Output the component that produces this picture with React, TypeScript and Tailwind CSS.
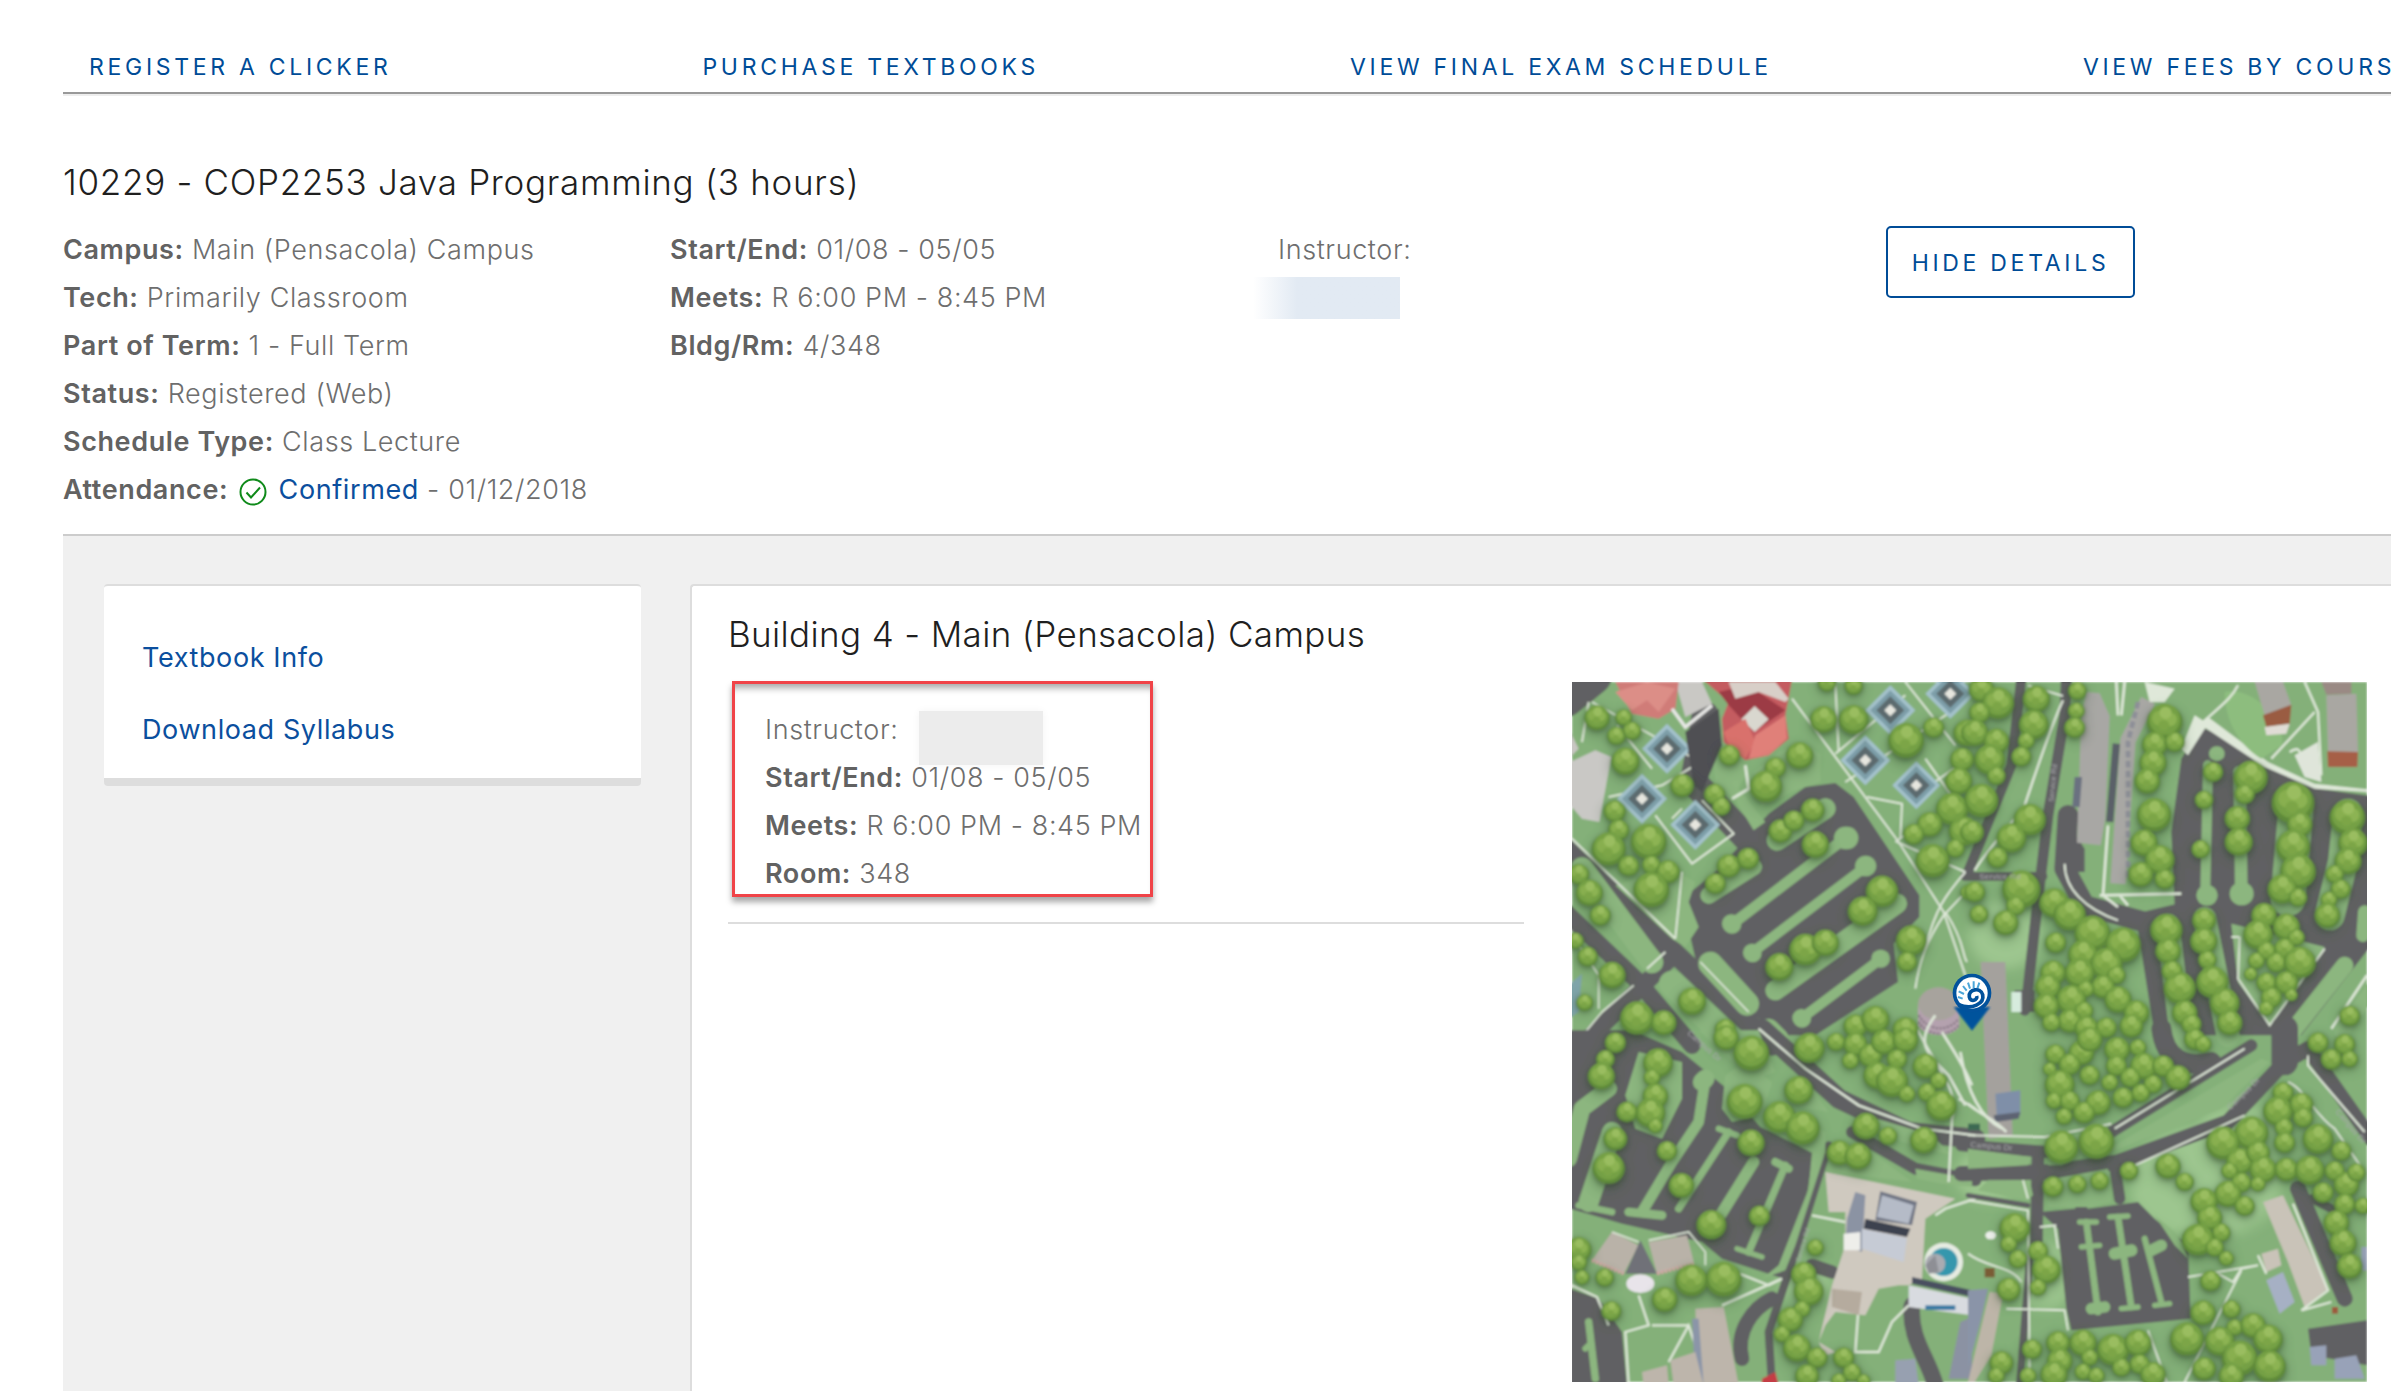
import React from "react";

type T = [number, number, number];

const q1: T[] = [[75,105,30],[155,105,20],[133,160,22],[180,145,22],[160,235,33],[128,385,26],[140,442,25],[110,498,40],[230,475,42],[170,550,25],[238,547,22],[288,567,28],[238,620,42],[20,575,25],[52,630,32],[85,698,25],[330,308,28],[472,218,25],[428,335,25],[448,372,22],[610,255,25],[582,310,38],[683,218,32],[755,110,32],[845,110,35],[765,0,22],[845,10,22],[1002,172,42],[1085,135,25],[1185,150,32],[1170,230,28],[1160,295,32],[1140,378,38],[1073,425,30],[1025,455,25],[1175,445,35],[1150,498,22],[1082,533,40],[1188,630,18],[625,445,28],[665,415,25],[722,382,28],[730,485,32],[470,550,28],[528,528,26],[430,603,25],[930,625,38],[872,685,35],[700,800,38],[760,780,32],[622,852,33],[1018,772,36],[1005,838,24],[120,877,32],[47,822,24],[38,960,20],[10,775,20],[360,955,33],[195,1005,40],[275,1020,30],[460,1040,25],[850,1030,28],[910,1010,33],[1000,1040,30]];
const q2: T[] = [[40,20,30],[90,60,38],[35,90,25],[205,48,32],[197,125,35],[175,175,20],[160,222,24],[20,150,32],[85,175,30],[65,230,36],[85,280,22],[40,352,40],[12,448,28],[328,25,22],[325,85,20],[320,135,25],[590,115,42],[560,185,30],[620,178,24],[555,240,32],[538,295,30],[558,395,40],[528,480,32],[575,530,35],[518,575,30],[590,590,24],[185,410,38],[130,465,35],[88,525,25],[20,628,25],[160,618,45],[143,670,23],[33,695,22],[113,720,30],[258,660,35],[305,695,38],[373,750,42],[465,785,42],[345,815,35],[415,842,38],[335,870,35],[445,878,22],[255,870,30],[405,912,28],[353,920,20],[240,912,30],[450,950,32],[310,950,35],[348,985,22],[235,970,30],[505,990,30],[305,1015,28],[250,1020,22],[355,1035,28],[415,1035,25],[490,1030,28],[263,780,25],[595,740,38],[600,805,30],[612,865,25],[635,915,38],[650,990,30],[670,1025,24],[708,712,28],[707,775,32],[718,832,22],[733,897,38],[770,960,35],[785,1020,30],[735,268,24],[708,352,22],[698,500,22],[848,283,40],[830,335,24],[808,407,30],[812,477,33],[975,358,50],[995,425,30],[975,490,40],[990,565,42],[943,618,35],[990,645,22],[1138,402,42],[1155,480,35],[1140,535,32],[1100,575,22],[1118,620,24],[1083,652,20],[1078,698,30],[888,698,30],[870,755,35],[955,732,32],[985,765,20],[895,805,22],[950,798,25],[925,840,24],[865,835,20],[995,838,38],[848,875,16],[895,900,24],[955,900,28],[970,938,15],[910,945,25],[895,978,18],[1145,1000,25]];
const q3: T[] = [[130,30,25],[100,80,22],[88,130,32],[258,90,35],[240,135,20],[250,190,30],[235,240,35],[250,280,18],[165,238,25],[130,318,28],[110,405,38],[285,355,24],[328,458,30],[418,575,35],[562,550,25],[537,330,32],[518,205,42],[622,252,38],[692,285,40],[680,172,34],[538,60,42],[462,15,30],[712,45,36],[792,28,22],[850,35,28],[895,68,28],[935,28,30],[1000,22,30],[975,80,24],[915,128,32],[960,145,38],[1060,100,30],[835,85,20],[1100,145,20],[1005,185,20],[1065,180,22],[1108,218,36],[882,280,32],[948,310,22],[1055,322,32],[802,360,30],[858,370,32],[20,650,30],[20,690,20],[30,735,18],[98,735,22],[358,742,38],[455,738,42],[278,800,30],[118,835,24],[730,645,20],[695,725,30],[710,775,35],[690,830,20],[655,860,30],[630,905,20],[675,945,33],[735,975,25],[815,975,25],[840,1020,22],[705,1030,28],[800,1045,18],[875,1045,16]];
const q4: T[] = [[262,65,24],[340,60,30],[365,20,30],[447,50,30],[510,45,20],[445,100,25],[305,95,26],[527,100,32],[585,100,26],[487,135,24],[365,128,24],[425,150,20],[630,135,30],[555,155,22],[245,110,16],[275,155,35],[518,182,22],[465,195,25],[258,205,20],[305,205,24],[390,210,30],[348,240,26],[288,252,20],[280,342,40],[385,325,42],[680,20,25],[705,35,20],[1050,30,25],[1090,80,25],[1130,35,25],[1145,80,20],[483,415,22],[600,400,30],[650,448,22],[255,462,25],[328,455,22],[395,445,22],[945,180,25],[930,235,35],[850,300,40],[1000,215,28],[948,285,22],[950,330,25],[1050,318,36],[1005,255,24],[765,330,40],[815,385,32],[870,360,28],[885,410,32],[785,415,20],[820,450,24],[870,455,18],[780,483,32],[830,520,24],[955,410,28],[1025,412,35],[1120,355,24],[1100,415,24],[1135,455,30],[1165,420,22],[1065,480,25],[1130,515,25],[1185,520,20],[708,505,32],[725,555,30],[690,620,38],[760,600,22],[740,645,22],[775,678,18],[140,585,36],[122,635,20],[150,680,22],[210,655,24],[235,710,34],[210,765,20],[122,770,28],[1105,570,30],[1125,630,32],[1145,700,30],[705,840,30],[728,745,25],[657,918,40],[790,830,22],[800,885,20],[855,878,30],[755,925,35],[900,918,35],[815,975,42],[905,1000,38],[708,1008,28],[790,1030,30],[345,930,32],[270,930,28],[192,950,24],[435,950,38],[510,930,32],[365,975,20],[515,995,24],[275,985,30],[460,1005,22],[345,1018,20],[258,1025,32],[385,1030,20],[180,1030,20],[100,990,28],[85,1030,20],[555,1025,30]];

const trees: T[] = [
  ...q1,
  ...q2.map(([x, y, r]): T => [x + 1188, y, r]),
  ...q3.map(([x, y, r]): T => [x, y + 1050, r]),
  ...q4.map(([x, y, r]): T => [x + 1188, y + 1050, r]),
].map(([x, y, r]): T => [x, y, r * 1.28]);

const ROAD = "#616163";
const PATH = "#dfe8d9";
const ISLE = "#8cb67f";

function Diamond({ x, y, s }: { x: number; y: number; s: number }) {
  const d = (k: number) => `${x},${y - k} ${x + k},${y} ${x},${y + k} ${x - k},${y}`;
  return (
    <g>
      <polygon points={d(s)} fill="#a4c2cc" />
      <polygon points={d(s * 0.8)} fill="#7d9ea8" />
      <polygon points={d(s * 0.56)} fill="#5b6a6e" />
      <polygon points={d(s * 0.24)} fill="#e6e6df" />
    </g>
  );
}

function MapDrawing() {
  return (
    <svg viewBox="0 0 2385 2100" className="block w-[795px] h-[700px]" aria-hidden="true">
      <defs>
        <filter id="soft" x="-2%" y="-2%" width="104%" height="104%">
          <feGaussianBlur stdDeviation="3.6" />
        </filter>
        <filter id="shade" x="-5%" y="-5%" width="110%" height="110%">
          <feGaussianBlur stdDeviation="18" />
        </filter>
        <filter id="tight" x="-5%" y="-5%" width="110%" height="110%">
          <feGaussianBlur stdDeviation="6" />
        </filter>
        <clipPath id="mapclip">
          <rect width="2385" height="2100" />
        </clipPath>
      </defs>
      <g clipPath="url(#mapclip)">
        <g filter="url(#soft)">
          <rect width="2385" height="2100" fill="#84b079" />
          <g fill="#9dc68f" filter="url(#shade)">
            <ellipse cx="1300" cy="760" rx="110" ry="100" />
            <ellipse cx="1900" cy="1500" rx="230" ry="170" />
            <ellipse cx="2000" cy="1330" rx="120" ry="60" />
            <ellipse cx="1250" cy="1480" rx="100" ry="80" />
            <ellipse cx="700" cy="1800" rx="80" ry="60" />
            <ellipse cx="1420" cy="1780" rx="90" ry="100" />
          </g>

          {/* Quadrant 1 ground */}
          <g fill="none" stroke={ROAD} strokeLinecap="round" strokeLinejoin="round">
            <path d="M-20 500 L310 815 L600 1090" strokeWidth="62" />
            <path d="M-20 690 L200 900 L360 1090" strokeWidth="52" />
            <path d="M60 1060 L310 815" strokeWidth="52" />
            <path d="M400 100 L365 300 L545 490" strokeWidth="82" />
            <path d="M-20 45 L60 -20" strokeWidth="120" />
          </g>
          <polygon fill={ROAD} points="345,640 440,560 590,395 700,315 790,303 845,345 1042,640 1042,705 965,785 978,900 730,1060 640,1060 545,1000 370,830 345,720" />
          <polygon fill={ISLE} points="425,245 470,215 530,260 500,320 580,420 545,445 490,355 430,300" />
          <polygon fill={ISLE} points="545,270 620,210 690,180 745,215 745,300 680,320 570,375" />
          <polygon fill={ISLE} points="300,560 370,600 350,660 380,735 340,795 300,770 130,610" />
          <g fill="none" stroke={ISLE} strokeLinecap="round">
            <path d="M482 725 L815 472" strokeWidth="32" />
            <path d="M820 468 L825 468" strokeWidth="68" />
            <path d="M478 725 L480 727" strokeWidth="56" />
            <path d="M540 812 L880 555" strokeWidth="30" />
            <path d="M880 552 L882 552" strokeWidth="62" />
            <path d="M540 812 L542 814" strokeWidth="54" />
            <path d="M690 1008 L925 832" strokeWidth="30" />
            <path d="M925 830 L927 830" strokeWidth="54" />
            <path d="M688 1008 L690 1010" strokeWidth="54" />
            <path d="M610 925 L975 665" strokeWidth="60" />
            <path d="M615 475 L760 380" strokeWidth="62" />
            <path d="M410 640 L545 555" strokeWidth="50" />
            <path d="M415 845 L525 965" strokeWidth="72" />
            <path d="M300 905 L490 1090" strokeWidth="78" />
            <path d="M30 560 L240 840" strokeWidth="68" />
            <path d="M590 1040 L620 1070" strokeWidth="60" />
          </g>
          <polygon fill="#7fa4a9" points="-10,910 30,875 20,990 -10,1010" />

          {/* Quadrant 2 ground */}
          <g transform="translate(1188,0)">
            <g fill="none" stroke={ROAD} strokeLinecap="round" strokeLinejoin="round">
              <path d="M160 -10 L130 250 L0 570" strokeWidth="30" />
              <path d="M295 -10 L290 100 L240 400 L210 650 L180 920 L170 985" strokeWidth="32" />
              <path d="M-10 583 L225 583" strokeWidth="26" />
              <path d="M300 400 L290 560 L350 670 L530 720 L700 680" strokeWidth="62" />
            </g>
            <polygon fill={ROAD} points="285,400 350,500 350,570 285,570" />
            <polygon fill={ROAD} points="140,925 200,925 200,990 140,990" />
            <polygon fill={ROAD} points="640,230 700,135 790,175 905,255 1050,320 1210,342 1210,790 1000,1060 560,1060 510,745 620,670 610,450" />
            <polygon fill={ISLE} points="790,725 1070,795 905,1030 810,900" />
            <g fill="none" stroke={ISLE} strokeLinecap="round">
              <path d="M720 250 L712 620" strokeWidth="30" />
              <path d="M745 215 L748 215" strokeWidth="44" />
              <path d="M716 640 L718 640" strokeWidth="62" />
              <path d="M815 270 L820 630" strokeWidth="38" />
              <path d="M820 635 L822 635" strokeWidth="70" />
              <path d="M985 360 L975 480 L960 650" strokeWidth="105" />
              <path d="M1140 395 L1125 540 L1085 700" strokeWidth="90" />
              <path d="M1130 850 L960 1065" strokeWidth="52" />
              <path d="M1190 690 L1185 760" strokeWidth="40" />
              <path d="M600 730 L640 1060" strokeWidth="70" />
              <path d="M710 710 L780 1060" strokeWidth="70" />
              <path d="M1120 1050 L1210 925" strokeWidth="42" />
            </g>
            <polygon fill={PATH} points="700,130 720,105 900,240 1040,305 1197,322 1197,330 1040,320 890,255" />
            <path d="M770 30 C 860 10 960 130 940 190 L 880 230 C 810 190 770 110 770 30Z" fill="#8dbd7e" />
            <path d="M910 230 L1040 90 M705 120 C760 70 790 50 810 10 M965 210 C1010 180 990 240 1020 260 M1010 0 L1050 90 L1060 280" stroke={PATH} strokeWidth="7" fill="none" />
            <polygon fill="#dfe5da" points="980,220 1050,180 1060,300 1010,285" />
            <polygon fill="#a8a7a4" points="356,30 395,34 425,102 412,410 398,490 327,482 340,100" />
            <path d="M540 55 L480 175 L450 605" stroke="#a8a7a4" strokeWidth="46" fill="none" />
            <path d="M445 185 L425 420" stroke="#5a6068" strokeWidth="22" fill="none" />
            <path d="M510 60 L480 180 L480 590" stroke="#8d8f97" strokeWidth="14" strokeDasharray="20 10" fill="none" />
            <polygon fill="#6b7180" points="320,285 342,285 335,375 313,375" />
            <path d="M405 640 L420 430 M395 640 L640 635 M445 0 L450 100 M470 0 L460 100 M405 640 L450 675 M455 640 L480 670" stroke={PATH} strokeWidth="8" fill="none" />
            <polygon fill={PATH} points="530,0 620,20 590,60 545,60" />
            <polygon fill={PATH} points="680,100 720,125 660,220 640,200" />
            <path d="M285 55 C 250 130 200 280 170 370 C 120 440 60 500 20 565" stroke={PATH} strokeWidth="7" fill="none" />
            <path d="M180 10 L285 42 M290 545 C290 620 350 680 450 715" stroke={PATH} strokeWidth="6" fill="none" />
            <path d="M815 765 L810 890 L905 1030 L1070 800 M790 765 L815 765" stroke={PATH} strokeWidth="6" fill="none" />
            <path d="M1090 1040 L1197 880" stroke={PATH} strokeWidth="8" fill="none" />
            <polygon fill="#a9a7a2" points="860,0 945,0 970,70 890,100" />
            <polygon fill="#9a5b42" points="885,100 970,68 965,125 895,135" />
            <polygon fill="#e0dcd5" points="890,135 965,125 955,155 895,160" />
            <polygon fill="#a9a7a2" points="1075,40 1165,35 1170,210 1080,210" />
            <polygon fill="#a65f46" points="1078,208 1170,210 1168,255 1080,255" />
            <polygon fill="#9a8a84" points="1060,0 1150,0 1150,35 1075,38" />
            <rect x="130" y="930" width="30" height="60" fill="#d6ebdd" />
          </g>

          {/* Main building */}
          <g>
            <ellipse cx="1100" cy="968" rx="62" ry="52" fill="#a7a39d" />
            <path d="M1038 968 L1038 1030 C1050 1060 1130 1075 1162 1035 L1162 968 C1150 1030 1050 1030 1038 968Z" fill="#b4a1ae" />
            <path d="M1040 1000 C1070 1050 1130 1050 1160 1010 M1040 1020 C1070 1065 1130 1065 1160 1030" stroke="#7e6d7c" strokeWidth="6" strokeDasharray="6 5" fill="none" />
            <polygon fill="#a4a19d" points="1226,840 1300,840 1322,1360 1250,1370" />
            <polygon fill="#7f8fa8" points="1270,1235 1345,1225 1345,1300 1275,1310" />
            <polygon fill="#5d6472" points="1265,1300 1345,1290 1340,1310 1270,1320" />
            <path d="M1165 1110 C1180 1200 1210 1300 1290 1340 M1110 1050 C1140 1100 1170 1140 1200 1210 M1090 1000 C1030 1080 1060 1110 1130 1180 L1180 1270" stroke={PATH} strokeWidth="8" fill="none" />
            <path d="M1060 800 C1090 680 1120 640 1180 570 M1120 690 C1180 780 1170 820 1185 840" stroke={PATH} strokeWidth="6" fill="none" />
          </g>

          {/* white paths quadrant 1 */}
          <g fill="none" stroke={PATH} strokeWidth="6" strokeLinejoin="round">
            <path d="M660 50 L980 480 L1115 690 L1180 880" />
            <path d="M1115 700 C1060 780 1040 850 1030 920 M1200 610 L1115 700" />
            <path d="M975 480 L1180 570 M970 480 L1050 420" />
            <path d="M885 345 L990 365 L985 470 M820 300 L1180 60 M790 215 L1000 40 M790 0 L800 210" />
            <path d="M1000 0 L1150 190 M1180 235 L1060 320 M1060 230 L1180 400" />
            <path d="M60 60 L385 240 L270 310 L110 345 M250 400 L360 545 L485 455 L390 355 M300 410 L330 380 M135 130 L240 260 M30 180 L50 60" />
            <path d="M0 470 L310 770 M310 770 L330 570 M225 860 L280 810" />
            <path d="M480 350 L530 320 L520 250" strokeWidth="9" />
            <path d="M385 840 L530 990" strokeWidth="5" />
            <path d="M0 760 L80 880 L80 980 M185 910 L90 990 L40 1050" strokeWidth="5" />
          </g>

          <Diamond x={285} y={200} s={75} />
          <Diamond x={210} y={350} s={75} />
          <Diamond x={370} y={428} s={75} />
          <Diamond x={955} y={85} s={75} />
          <Diamond x={1135} y={35} s={75} />
          <Diamond x={880} y={235} s={75} />
          <Diamond x={1033} y={310} s={72} />

          <polygon fill="#c9c8c5" points="-5,240 70,205 118,225 82,420 30,410 -5,370" />
          <polygon fill="#c8c6c2" points="-5,150 20,200 -5,225" />
          <polygon fill="#c9c8c4" points="310,0 390,0 420,65 340,105" />
          <polygon fill="#4f4f53" points="340,150 440,80 450,190 390,330 365,310" />
          <path d="M130 0 L320 0 L310 80 L260 110 L180 95 Z" fill="#d07c78" />
          <path d="M225 0 L310 20 L260 90 L225 55 L180 85 L130 30 Z" fill="#dc8e87" />
          <path d="M390 -10 L660 -10 L640 100 L650 170 L590 220 L520 235 L455 180 L450 110 L470 60Z" fill="#c45c60" />
          <polygon fill="#9c3a44" points="440,30 530,10 640,85 545,150 470,70" />
          <polygon fill="#d8cfc8" points="470,0 610,0 650,50 640,60 560,30 490,50" />
          <polygon fill="#d9d7cf" points="548,72 590,112 548,150 508,112" />
          <polygon fill="#d9716c" points="455,150 520,110 550,180 520,230 470,190" />
          <polygon fill="#e08079" points="550,160 640,100 645,170 590,220 530,230" />
          <path d="M300 80 L340 135 L420 70" stroke="#e8e8e6" strokeWidth="10" fill="none" />

          {/* Quadrant 3 ground */}
          <g transform="translate(0,1050)">
            <polygon fill={ROAD} points="-5,-5 180,-5 330,60 465,170 565,285 725,365 700,520 635,740 450,680 390,630 150,575 -5,530" />
            <g fill="none" stroke={ROAD} strokeLinecap="round" strokeLinejoin="round">
              <path d="M570 -10 L800 200 L1010 300 L1210 320" strokeWidth="60" />
              <path d="M840 300 L1030 410 L1210 445" strokeWidth="36" />
              <path d="M770 340 L650 720 L590 900 L600 1060" strokeWidth="24" />
              <path d="M600 800 C540 830 490 900 510 980" strokeWidth="44" />
              <path d="M720 700 L780 720" strokeWidth="40" />
              <path d="M1020 820 C1010 920 1070 980 1090 1060" strokeWidth="50" />
            </g>
            <polygon fill={ROAD} points="-5,770 80,800 150,900 165,1060 -5,1060" />
            <polygon fill={ISLE} points="460,130 520,90 600,150 570,250 480,270 450,230" />
            <polygon fill={ISLE} points="640,180 700,140 770,240 680,225" />
            <polygon fill={ISLE} points="380,-5 560,-5 610,120 540,145" />
            <polygon fill={ISLE} points="580,290 620,220 760,300 760,360 670,640 640,715 570,740 620,700 710,470 720,360" />
            <polygon fill={ISLE} points="830,270 880,250 1080,310 1140,370 1020,340" />
            <polygon fill={ISLE} points="1030,410 1200,440 1200,465 1110,455 1035,440" />
            <polygon fill={ISLE} points="770,360 800,330 900,360 1020,450 770,420" />
            <polygon fill={ISLE} points="200,60 330,90 330,200 270,320 190,290 160,190" />
            <g fill="none" stroke={ISLE} strokeLinecap="round" strokeLinejoin="round">
              <path d="M50 510 L80 420 L120 300" strokeWidth="60" />
              <path d="M20 520 L120 540" strokeWidth="20" />
              <path d="M-10 380 L30 230 L110 170" strokeWidth="50" />
              <path d="M210 540 L300 390 L380 270 L400 140" strokeWidth="32" />
              <path d="M170 540 L270 550" strokeWidth="26" />
              <path d="M390 150 L400 140" strokeWidth="55" />
              <path d="M320 530 L470 300" strokeWidth="22" />
              <path d="M440 290 L495 310" strokeWidth="18" />
              <path d="M420 590 L545 390" strokeWidth="34" />
              <path d="M530 660 L640 400" strokeWidth="22" />
              <path d="M610 390 L650 410" strokeWidth="24" />
              <path d="M495 650 L570 675" strokeWidth="16" />
              <path d="M50 870 L70 1040" strokeWidth="22" />
              <path d="M50 940 L40 950" strokeWidth="18" />
            </g>
            <path d="M560 -10 L700 110 L860 220 L1050 290 L1210 310" stroke={PATH} strokeWidth="7" fill="none" />
            <path d="M1035 -10 C1090 100 1170 190 1140 260 L1130 450 M1160 200 L1210 230" stroke={PATH} strokeWidth="7" fill="none" />
            <path d="M0 760 L75 795 L110 880 M200 790 L230 880 L160 900 L170 1060 M240 880 L350 880 M290 990 L350 880 L370 940 M490 720 L590 760 L630 740 L450 820 M720 550 L820 570 M860 820 L850 960 L920 960 L960 870 L1010 820 M1090 550 L1120 530 L1210 500" stroke={PATH} strokeWidth="7" fill="none" />
            <polygon fill="#b9b2a8" points="120,600 200,640 155,725 60,685" />
            <polygon fill="#b9b2a8" points="230,630 345,610 365,690 255,725" />
            <polygon fill="#6f7178" points="205,625 255,725 160,725" />
            <path d="M60 685 L155 725 M255 725 L365 695" stroke="#d4a6a6" strokeWidth="10" strokeDasharray="8 4" fill="none" />
            <ellipse cx="205" cy="755" rx="42" ry="28" fill="#e8e4ea" />
            <path d="M120 600 L200 630 M230 625 L350 600 L400 660 L400 700" stroke={PATH} strokeWidth="5" fill="none" />
            <polygon fill="#bdb5ab" points="370,830 455,825 500,1060 380,1060" />
            <polygon fill="#8b95a8" points="360,860 380,860 395,1060 370,1060" />
            <polygon fill="#bdb5ab" points="210,1020 285,1000 290,1060 215,1060" />
            <polygon fill="#bdb5ab" points="295,985 370,960 395,1060 305,1060" />
            <polygon fill="#c43c44" points="570,1040 610,1020 620,1060 570,1060" />
            <polygon fill="#cfc9bf" points="760,420 1150,500 1060,560 1050,740 1010,760 980,760 920,770 880,850 790,840 760,880 740,930 790,960 760,970 740,930 780,760 820,640 820,540 770,540" />
            <polygon fill="#8b93a3" points="850,480 880,490 870,660 820,640 825,560" />
            <polygon fill="#6f7583" points="925,478 1035,510 1020,580 910,565" />
            <polygon fill="#b5bbc7" points="930,490 1025,520 1010,575 915,555" />
            <polygon fill="#3e4250" points="880,560 1015,590 1005,615 875,590" />
            <polygon fill="#c6cbd5" points="870,590 1005,618 995,690 870,650" />
            <polygon fill="#eeeeea" points="815,605 865,600 865,655 815,655" />
            <polygon fill="#b5ab9e" points="780,770 870,780 860,850 780,825" />
            <polygon fill="#4a5060" points="1020,735 1200,775 1200,795 1020,755" />
            <polygon fill="#d8dbe0" points="1010,760 1200,800 1200,850 1010,825" />
            <rect x="1060" y="820" width="90" height="14" fill="#3a79a3" />
            <polygon fill="#8b92a3" points="1165,870 1200,855 1200,1040 1130,1040" />
            <polygon fill="#97a0b0" points="970,985 1030,980 1040,1060 970,1060" />
            <circle cx="1115" cy="690" r="58" fill="#e6ebe2" />
            <circle cx="1115" cy="690" r="42" fill="#3697ad" />
            <circle cx="1090" cy="695" r="30" fill="#a9abb1" />
            <polygon fill="#8e8f95" points="1060,700 1090,670 1100,720 1070,725" />
          </g>

          {/* Quadrant 4 ground */}
          <g transform="translate(1188,1050)">
            <g fill="none" stroke={ROAD} strokeLinecap="round" strokeLinejoin="round">
              <path d="M-20 340 L240 360 L430 300 L850 40" strokeWidth="36" />
              <path d="M-20 425 L240 420 L450 390 L780 270 L950 90 L1020 50" strokeWidth="46" />
              <path d="M950 -10 L950 90" strokeWidth="80" />
              <path d="M1020 50 L1210 320" strokeWidth="44" />
              <path d="M210 360 L205 640" strokeWidth="38" />
              <path d="M440 400 L455 500" strokeWidth="34" />
              <path d="M185 680 L155 1060" strokeWidth="22" />
              <path d="M990 470 L1130 800" strokeWidth="48" />
              <path d="M1030 500 L1090 530" strokeWidth="26" />
              <path d="M0 490 L180 520" strokeWidth="14" />
              <path d="M580 -10 C590 80 650 110 730 90" strokeWidth="60" />
            </g>
            <polygon fill={ROAD} points="215,540 320,530 340,505 360,530 510,510 560,560 660,640 668,860 310,895 295,830 270,590" />
            <polygon fill={ROAD} points="1020,890 1197,865 1197,1000 1030,970" />
            <polygon fill={ISLE} points="240,330 420,285 430,340 280,400 240,400" />
            <polygon fill={ISLE} points="232,445 420,410 430,510 370,525 240,525" />
            <polygon fill={ISLE} points="0,350 190,375 180,400 0,410" />
            <polygon fill={ISLE} points="30,475 60,445 185,445 195,490 175,505" />
            <polygon fill={ISLE} points="440,340 880,80 905,90 760,230 430,360" />
            <polygon fill={ISLE} points="560,550 620,600 640,630 660,680 620,640" />
            <g fill="none" stroke={ISLE} strokeLinecap="round" strokeLinejoin="round">
              <path d="M355 570 L390 840" strokeWidth="20" />
              <path d="M335 570 L385 570" strokeWidth="16" />
              <path d="M340 645 L395 640" strokeWidth="16" />
              <path d="M370 830 L410 825" strokeWidth="34" />
              <path d="M450 555 L490 825" strokeWidth="20" />
              <path d="M425 555 L480 552" strokeWidth="16" />
              <path d="M440 665 L490 655" strokeWidth="36" />
              <path d="M460 830 L510 825" strokeWidth="16" />
              <path d="M530 620 L580 810" strokeWidth="18" />
              <path d="M560 820 L605 815" strokeWidth="16" />
              <path d="M550 655 L580 640" strokeWidth="34" />
            </g>
            <path d="M0 505 L180 535 L185 1060 M0 665 C60 710 130 700 160 750 M115 830 L290 835 L300 895 M260 580 L270 650 M215 585 L265 580 M660 735 L870 700 L820 710 L795 750 L750 725 M540 895 L600 1060 M820 715 L650 1050 M165 445 L180 500" stroke={PATH} strokeWidth="6" fill="none" />
            <path d="M1020 70 L1020 100 L1190 300 M960 150 C1010 170 1040 250 1100 290 L1190 420 M500 400 L830 250 M440 290 L830 50 M0 310 L230 315 L430 275" stroke={PATH} strokeWidth="6" fill="none" />
            <path d="M0 215 C40 250 80 260 115 300" stroke={PATH} strokeWidth="8" fill="none" />
            <ellipse cx="68" cy="610" rx="16" ry="12" fill="#eef0ec" />
            <rect x="50" y="708" width="30" height="28" fill="#7a5b35" />
            <polygon fill="#c9c3b8" points="885,510 945,490 1080,770 1010,825 960,690" />
            <polygon fill="#a6b0c4" points="895,745 945,720 980,810 935,845" />
            <polygon fill="#c9c3b8" points="880,665 930,650 940,700 895,720" />
            <path d="M975 515 L1080 775 L1000 835 M870 670 L895 725 M1000 835 L1090 810" stroke={PATH} strokeWidth="7" fill="none" />
            <rect x="1092" y="825" width="18" height="20" fill="#9b5a3c" />
            <polygon fill="#98a2b8" points="1025,945 1075,940 1075,1000 1030,1000" />
            <polygon fill="#98a2b8" points="1100,980 1165,970 1190,1040 1100,1040" />
            <polygon fill="#98a2b8" points="1180,645 1197,645 1197,715 1180,715" />
            <polygon fill="#8a94a8" points="0,775 60,770 40,860 0,1010" />
            <polygon fill="#bdb5a8" points="65,780 105,785 70,970 20,1050 0,1050" />
            <rect x="0" y="275" width="36" height="20" fill="#3e6a52" />
          </g>

          <g filter="url(#shade)" fill="#2b4a2c" opacity="0.3">
            {trees.map(([x, y, r], i) => (
              <circle key={i} cx={x} cy={y + r * 0.4} r={r * 1.1} />
            ))}
          </g>
          <g filter="url(#tight)" fill="#2a4122" opacity="0.38">
            {trees.map(([x, y, r], i) => (
              <circle key={i} cx={x} cy={y + r * 0.2} r={r * 1.02} />
            ))}
          </g>
          {trees.map(([x, y, r], i) => (
            <g key={i}>
              <ellipse cx={x} cy={y + r * 0.08} rx={r} ry={r * 0.95} fill="#5f8a3a" />
              <circle cx={x} cy={y - r * 0.06} r={r * 0.86} fill="#75a045" />
              <circle cx={x - r * 0.28} cy={y - r * 0.12} r={r * 0.42} fill="#88af4f" />
              <circle cx={x + r * 0.3} cy={y - r * 0.05} r={r * 0.38} fill="#8cb352" />
              <circle cx={x + r * 0.05} cy={y - r * 0.42} r={r * 0.34} fill="#9abd60" />
              <circle cx={x - r * 0.05} cy={y + r * 0.28} r={r * 0.3} fill="#7ba547" />
            </g>
          ))}

          <g fill="#a9a9ad" fontFamily="'Liberation Sans', sans-serif" fontSize="24">
            <text x="1222" y="592">Service Rd</text>
            <text transform="translate(345,1055) rotate(42)">Campus Dr</text>
            <text transform="translate(1195,1395) rotate(5)">Campus Dr</text>
            <text transform="translate(1975,1285) rotate(-45)">Campus Dr</text>
            <text transform="translate(2290,1290) rotate(50)">Campus Dr</text>
            <text transform="translate(1445,360) rotate(-85)" fontSize="22">Service Rd</text>
            <text transform="translate(685,1740) rotate(-74)" fontSize="20">Service Rd</text>
          </g>
        </g>

        <g>
          <path d="M1145 975 L1200 1046 L1255 975 Z" fill="#02529c" filter="url(#soft)" />
          <circle cx="1200" cy="933" r="58" fill="#02529c" />
          <circle cx="1200" cy="933" r="47" fill="#fff" />
          <g stroke="#4ca6d8" strokeWidth="6" fill="none">
            <path d="M1172 950 L1158 945 M1176 936 L1160 928 M1184 926 L1173 912 M1194 920 L1188 902 M1205 918 L1205 898 M1216 920 L1222 902" />
          </g>
          <path d="M1160 968 C1200 985 1238 965 1232 938 C1226 915 1188 920 1192 945 C1195 962 1218 955 1214 942" stroke="#02529c" strokeWidth="11" fill="none" />
        </g>
      </g>
    </svg>
  );
}

const LABEL = "font-semibold text-[#626262]";

function Row({ label, children }: { label: string; children?: React.ReactNode }) {
  return (
    <div className="h-[48px] leading-[48px] whitespace-nowrap text-[#6e6e6e]">
      <span className={LABEL}>{label}</span> {children}
    </div>
  );
}

function CheckIcon() {
  return (
    <svg viewBox="0 0 28 28" className="inline-block w-[28px] h-[28px] align-[-7px] mx-[3px]" aria-hidden="true">
      <circle cx="14" cy="14" r="12.5" fill="none" stroke="#0f8a1a" strokeWidth="2" />
      <path d="M7.5 14.5 L12 19.5 L21 9.5" fill="none" stroke="#0f8a1a" strokeWidth="2" />
    </svg>
  );
}

const TABS = ["REGISTER A CLICKER", "PURCHASE TEXTBOOKS", "VIEW FINAL EXAM SCHEDULE", "VIEW FEES BY COURSE"];

export default function App() {
  return (
    <div className="w-[2391px] h-[1391px] overflow-hidden bg-white pl-[63px] font-['Inter','Noto_Sans',sans-serif] text-[27px] tracking-[0.6px] font-light">
      <nav className="h-[94px] pl-[26px] pt-[51px] flex gap-[311px] border-b-2 border-[#999999] shadow-[0_2px_0_#eeeeee] text-[#004c97] text-[23px] font-normal leading-[32px] tracking-[3.7px] whitespace-nowrap">
        {TABS.map((t) => (
          <a key={t} className="shrink-0">{t}</a>
        ))}
      </nav>

      <section className="h-[442px] pt-[64px] border-b-2 border-[#cccccc]">
        <h1 className="h-[48px] leading-[48px] text-[35px] font-light tracking-[0.7px] text-[#1f1f1f] whitespace-nowrap">
          10229 - COP2253 Java Programming (3 hours)
        </h1>
        <div className="mt-[20px] flex">
          <div className="w-[607px] shrink-0">
            <Row label="Campus:">Main (Pensacola) Campus</Row>
            <Row label="Tech:">Primarily Classroom</Row>
            <Row label="Part of Term:">1 - Full Term</Row>
            <Row label="Status:">Registered (Web)</Row>
            <Row label="Schedule Type:">Class Lecture</Row>
            <Row label="Attendance:">
              <CheckIcon /> <span className="text-[#0b4f9e] font-normal">Confirmed</span> - 01/12/2018
            </Row>
          </div>
          <div className="w-[608px] shrink-0">
            <Row label="Start/End:">01/08 - 05/05</Row>
            <Row label="Meets:">R 6:00 PM - 8:45 PM</Row>
            <Row label="Bldg/Rm:">4/348</Row>
          </div>
          <div className="w-[608px] shrink-0">
            <div className="h-[48px] leading-[48px] text-[#6e6e6e]">Instructor:</div>
            <div className="mt-[3px] -ml-[25px] w-[147px] h-[42px] bg-gradient-to-r from-white to-[#e2eaf3] to-[30%]" />
          </div>
          <button className="w-[249px] h-[72px] border-2 border-[#004c97] rounded-[5px] bg-white text-[#004c97] text-[23px] font-normal tracking-[3.7px] pt-[3px] whitespace-nowrap">
            HIDE DETAILS
          </button>
        </div>
      </section>

      <main className="h-[855px] bg-[#f0f0f0] pt-[48px] pl-[41px] flex items-start gap-[49px]">
        <aside className="w-[537px] shrink-0 bg-white border-t-2 border-[#dddddd] border-b-8 rounded-[4px] pt-[48px] pb-[24px] pl-[38px] flex flex-col gap-[24px] text-[#0b4f9e] font-normal">
          <a className="h-[48px] leading-[48px]">Textbook Info</a>
          <a className="h-[48px] leading-[48px]">Download Syllabus</a>
        </aside>

        <div className="flex-1 h-[807px] bg-white border-t-2 border-l-2 border-[#dddddd] rounded-tl-[4px] pt-[24px] pl-[36px]">
          <h2 className="h-[48px] leading-[48px] text-[35px] font-light tracking-[0.36px] text-[#1f1f1f] whitespace-nowrap">
            Building 4 - Main (Pensacola) Campus
          </h2>
          <div className="mt-[24px] flex gap-[48px]">
            <div className="w-[796px] shrink-0">
              <div className="-mt-[1px] ml-[4px] w-[421px] h-[216px] border-[3px] border-[#f04348] pt-[22px] pl-[30px] shadow-[inset_0_9px_7px_-5px_rgba(0,0,0,0.35),0_5px_6px_rgba(0,0,0,0.35)]">
                <div className="h-[48px] leading-[48px] whitespace-nowrap text-[#6e6e6e] flex items-start">
                  <span className="w-[154px] shrink-0">Instructor:</span>
                  <span className="mt-[5px] w-[124px] h-[54px] shrink-0 bg-[#ececec] shadow-[0_0_8px_#f4f4f4]" />
                </div>
                <Row label="Start/End:">01/08 - 05/05</Row>
                <Row label="Meets:">R 6:00 PM - 8:45 PM</Row>
                <Row label="Room:">348</Row>
              </div>
              <div className="mt-[25px] h-[2px] bg-[#dddddd]" />
            </div>
            <MapDrawing />
          </div>
        </div>
      </main>
    </div>
  );
}
